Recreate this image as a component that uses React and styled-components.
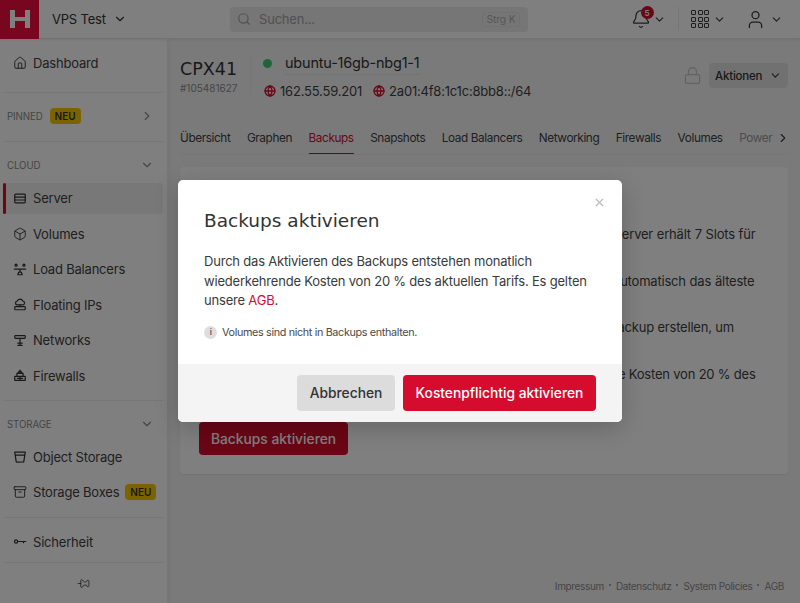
import { Fragment } from 'react';
import styled, { createGlobalStyle } from 'styled-components';
import {
  Archive, Bell, ChevronDown, ChevronRight, Globe, Home, Lock, Pin, Search, User, X, Box,
} from 'lucide-react';

const GlobalStyle = createGlobalStyle`
  html, body { margin: 0; padding: 0; height: 100%; }
  body {
    font-family: Inter, "Liberation Sans", sans-serif;
    letter-spacing: -0.2px;
    color: #3a3a3a;
    background: #f5f5f5;
    overflow: hidden;
  }
  * { box-sizing: border-box; }
`;

const Page = styled.div`
  width: 800px;
  height: 603px;
  position: relative;
  overflow: hidden;
  display: flex;
  flex-direction: column;
`;

// Top bar
const TopBar = styled.header`
  height: 39px;
  flex: none;
  display: flex;
  align-items: center;
  position: relative;
  z-index: 1;
  background: #fff;
  border-bottom: 1px solid #e4e4e4;
  box-shadow: 0 1px 3px rgba(0, 0, 0, 0.08);
`;

const Logo = styled.div`
  width: 39px;
  height: 39px;
  background: #f00c3c;
  color: #fff;
  display: flex;
  align-items: center;
  justify-content: center;
`;

const Project = styled.div`
  display: flex;
  align-items: center;
  gap: 7px;
  margin-left: 13px;
  width: 178px;
  font-size: 13px;
  color: #333;
`;

const SearchBox = styled.div`
  width: 298px;
  height: 25px;
  background: #ededed;
  border-radius: 4px;
  display: flex;
  align-items: center;
  padding: 0 8px 0 7px;
  gap: 8px;
  font-size: 13px;
  color: #a2a2a2;
`;

const SearchText = styled.span`
  flex: 1;
`;

const Kbd = styled.span`
  width: 38px;
  height: 15px;
  font-size: 10.5px;
  line-height: 13px;
  text-align: center;
  border: 1px solid #e2e2e2;
  border-radius: 3px;
  color: #b0b0b0;
`;

const TopActions = styled.div`
  display: flex;
  align-items: center;
  margin-left: 103px;
`;

const ActionGroup = styled.div`
  position: relative;
  display: flex;
  align-items: center;
  gap: ${p => p.$gap || 5}px;
  margin-right: ${p => p.$mr || 0}px;
`;

const Badge = styled.span`
  position: absolute;
  top: -3px;
  left: 9.5px;
  width: 13px;
  height: 13px;
  border-radius: 50%;
  background: #d50c2d;
  color: #fff;
  font-size: 8px;
  font-weight: 600;
  display: flex;
  align-items: center;
  justify-content: center;
`;

const Divider = styled.span`
  width: 1px;
  height: 24px;
  background: #ececec;
  margin: 0 12px;
`;

const DotGrid = styled.div`
  display: grid;
  grid-template-columns: repeat(3, 5px);
  grid-auto-rows: 5px;
  gap: 1.5px;
`;

const Dot = styled.span`
  border: 1.3px solid #3a3a3a;
  border-radius: 1px;
`;

// Body layout
const Body = styled.div`
  flex: 1;
  display: flex;
  min-height: 0;
`;

const Sidebar = styled.aside`
  width: 168px;
  flex: none;
  background: #fff;
  border-right: 1px solid #ececec;
  box-shadow: 1px 0 6px rgba(0, 0, 0, 0.06);
  display: flex;
  flex-direction: column;
  padding: 0 4px 0 3px;
  position: relative;
`;

const NavItem = styled.div`
  height: 31px;
  margin: ${p => p.$mt || 0}px 0 ${p => (p.$mb === undefined ? 4.5 : p.$mb)}px 0;
  display: flex;
  align-items: center;
  gap: 6px;
  padding-left: 10px;
  font-size: 13px;
  color: #3f3f3f;
  white-space: nowrap;
  border-radius: 3px;
  position: relative;
  background: ${p => (p.$active ? '#f1f1f1' : 'transparent')};
  &::before {
    content: '';
    display: ${p => (p.$active ? 'block' : 'none')};
    position: absolute;
    left: 0;
    top: 0;
    bottom: 0;
    width: 3px;
    border-radius: 2px;
    background: #d50c2d;
  }
`;

const IconSlot = styled.span`
  width: 14px;
  height: 15px;
  display: flex;
  align-items: center;
  justify-content: center;
  color: #333;
`;

const Rule = styled.div`
  height: 1px;
  flex: none;
  background: #efefef;
  margin-bottom: ${p => p.$mb || 0}px;
`;

const SectionHead = styled.div`
  height: 16px;
  flex: none;
  display: flex;
  align-items: center;
  padding: 0 9px 0 4px;
  gap: 7px;
  font-size: 9.7px;
  letter-spacing: -0.1px;
  color: #8b8b8b;
  margin-bottom: ${p => p.$mb || 0}px;
`;

const Grow = styled.span`
  flex: 1;
`;

const NewTag = styled.span`
  width: 31px;
  height: 16px;
  flex: none;
  background: #f7c600;
  color: #333;
  font-size: 10px;
  font-weight: 600;
  letter-spacing: 0;
  border-radius: 4px;
  line-height: 16px;
  text-align: center;
`;

const Unpin = styled.div`
  margin-top: auto;
  height: 41px;
  border-top: 1px solid #efefef;
  display: flex;
  align-items: center;
  justify-content: center;
  color: #3f3f3f;
`;

// Main column
const Main = styled.main`
  flex: 1;
  min-width: 0;
  display: flex;
  flex-direction: column;
  padding: 0 12px;
  position: relative;
`;

const ServerHead = styled.div`
  height: 79px;
  display: flex;
  padding-top: 17px;
  flex: none;
`;

const Plan = styled.div`
  width: 71px;
  height: 39px;
  border-right: 1px solid #efefef;
`;

const PlanName = styled.div`
  font-family: "DejaVu Sans", sans-serif;
  font-size: 17.5px;
  line-height: 26px;
  letter-spacing: 0;
  color: #333;
`;

const PlanId = styled.div`
  font-size: 10px;
  line-height: 12px;
  color: #8b8b8b;
  letter-spacing: 0;
`;

const ServerInfo = styled.div`
  margin-left: 12px;
  flex: 1;
`;

const NameRow = styled.div`
  display: flex;
  align-items: center;
  height: 22px;
  margin-top: -4px;
`;

const StatusDot = styled.span`
  width: 9px;
  height: 9px;
  border-radius: 50%;
  background: #3ecb73;
  margin-right: 13px;
`;

const ServerName = styled.span`
  font-size: 14.5px;
  line-height: 18px;
  color: #333;
  border-bottom: 1px solid #e8e8e8;
  padding-bottom: 2px;
  margin-top: 2px;
`;

const IpRow = styled.div`
  display: flex;
  align-items: center;
  margin-top: 7px;
  height: 20px;
  font-size: 13px;
  color: #3f3f3f;
`;

const Ip = styled.span`
  display: flex;
  align-items: center;
  gap: 4px;
  margin: 0 10px 0 1px;
  svg { color: #d50c2d; }
`;

const HeadActions = styled.div`
  display: flex;
  align-items: center;
  gap: 7px;
  height: 25px;
  margin-top: 7px;
  color: #c4c4c4;
`;

const ActionsButton = styled.button`
  width: 79px;
  height: 25px;
  border: 0;
  border-radius: 4px;
  background: #e2e2e2;
  color: #333;
  font: 500 11.5px Inter, sans-serif;
  letter-spacing: -0.2px;
  display: flex;
  align-items: center;
  justify-content: center;
  gap: 7px;
`;

const Tabs = styled.nav`
  height: 37px;
  flex: none;
  display: flex;
  gap: 16.5px;
  font-size: 11.8px;
  letter-spacing: -0.4px;
  white-space: nowrap;
  overflow: hidden;
  position: relative;
  border-bottom: 1px solid #ececec;
`;

const Tab = styled.span`
  height: 37px;
  padding-top: 13px;
  color: ${p => (p.$active ? '#d50c2d' : p.$faded ? '#9a9a9a' : '#3f3f3f')};
  border-bottom: 2px solid ${p => (p.$active ? '#d50c2d' : 'transparent')};
`;

const TabArrow = styled.span`
  position: absolute;
  right: -2px;
  top: 13px;
  color: #3a3a3a;
  display: flex;
`;

const Card = styled.section`
  margin-top: 12px;
  height: 307px;
  flex: none;
  background: #fff;
  border-radius: 4px;
  box-shadow: 0 1px 2px rgba(0, 0, 0, 0.08);
  padding: 57px 19px 0;
  font-size: 13px;
  line-height: 20px;
  color: #3f3f3f;
`;

const CardLine = styled.p`
  margin: 0 0 ${p => p.$mb || 26.7}px;
  word-spacing: ${p => p.$ws || 0}px;
  white-space: nowrap;
`;

const PrimaryBackup = styled.button`
  border: 0;
  display: block;
  width: 149px;
  height: 33px;
  border-radius: 4px;
  background: #d50c2d;
  color: #fff;
  font: 500 13.8px Inter, sans-serif;
`;

const Footer = styled.footer`
  display: flex;
  justify-content: flex-end;
  align-items: center;
  gap: 5px;
  margin-top: 106px;
  padding-right: 4px;
  font-size: 10px;
  line-height: 12px;
  letter-spacing: -0.35px;
  color: #8b8b8b;
`;

const FooterDot = styled.span`
  width: 2px;
  height: 2px;
  border-radius: 50%;
  background: #8b8b8b;
  margin-top: -3px;
`;

// Modal
const Backdrop = styled.div`
  position: absolute;
  inset: 0;
  z-index: 2;
  background: rgba(0, 0, 0, 0.5);
  display: flex;
  justify-content: center;
  padding-top: 180px;
`;

const Modal = styled.div`
  width: 444px;
  height: 242px;
  background: #fff;
  border-radius: 5px;
  position: relative;
  overflow: hidden;
  box-shadow: 0 6px 24px rgba(0, 0, 0, 0.2);
  display: flex;
  flex-direction: column;
`;

const CloseButton = styled.span`
  position: absolute;
  top: 16px;
  right: 16px;
  color: #bcbcbc;
  display: flex;
`;

const ModalBody = styled.div`
  flex: 1;
  padding: 28px 26px 0;
`;

const ModalTitle = styled.h2`
  margin: 0 0 18px;
  font-family: "DejaVu Sans", sans-serif;
  font-size: 18.5px;
  line-height: 26px;
  font-weight: 400;
  letter-spacing: 0;
  color: #333;
`;

const ModalText = styled.p`
  margin: 0;
  font-size: 13px;
  line-height: 19.5px;
  color: #3a3a3a;
`;

const Link = styled.a`
  color: #d50c2d;
`;

const Hint = styled.div`
  display: flex;
  align-items: center;
  gap: 5px;
  margin-top: 15px;
  font-size: 10.8px;
  letter-spacing: -0.35px;
  color: #4a4a4a;
`;

const HintIcon = styled.span`
  width: 13px;
  height: 13px;
  border-radius: 50%;
  background: #dedede;
  color: #555;
  font-size: 8px;
  font-weight: 600;
  display: flex;
  align-items: center;
  justify-content: center;
`;

const ModalFooter = styled.div`
  height: 58px;
  flex: none;
  background: #f4f4f4;
  display: flex;
  justify-content: flex-end;
  align-items: center;
  gap: 8px;
  padding-right: 26px;
`;

const ModalButton = styled.button`
  border: 0;
  height: 36px;
  width: ${p => p.$width}px;
  border-radius: 4px;
  background: ${p => (p.$primary ? '#d50c2d' : '#dcdcdc')};
  color: ${p => (p.$primary ? '#fff' : '#333')};
  font: 500 13.8px Inter, sans-serif;
`;

// Icons that lucide has no close match for
const HLogo = () => (
  <svg width="20" height="18" viewBox="0 0 20 18" fill="currentColor">
    <path d="M0 0h5v7h10V0h5v18h-5v-7H5v7H0z" />
  </svg>
);

const Line = ({ children, size = 15 }) => (
  <svg width={size} height={size} viewBox="0 0 16 16" fill="none" stroke="currentColor" strokeWidth="1.4" strokeLinecap="round" strokeLinejoin="round">
    {children}
  </svg>
);

const ServerIcon = () => (
  <Line><rect x="2" y="3" width="12" height="10" rx="1" /><path d="M2 6.3h12M2 9.7h12" /></Line>
);
const BalancerIcon = () => (
  <Line>
    <circle cx="3.5" cy="3" r="1.2" /><circle cx="12.5" cy="3" r="1.2" />
    <path d="M1.5 7.5h13M8 7.5v3M5.5 14l1-3h3l1 3z" />
  </Line>
);
const FloatingIcon = () => (
  <Line>
    <path d="M4.5 8.5a2.2 2.2 0 0 1 .3-4.3A3.4 3.4 0 0 1 11.2 4a2.3 2.3 0 0 1 .3 4.5z" />
    <path d="M8 8.5v2" /><rect x="2" y="10.5" width="12" height="3.5" rx="0.8" />
  </Line>
);
const NetworkIcon = () => (
  <Line>
    <rect x="2" y="2.5" width="12" height="3" rx="0.8" />
    <path d="M8 5.5v8M5.5 11h5M5.5 13.5h5" />
  </Line>
);
const FirewallIcon = () => (
  <Line>
    <path d="M8 2l2.3 3H5.7zM4.5 5.5h7v3.5h-7zM2 9h12v4.5H2zM8 9v4.5M5 11.2h6" />
  </Line>
);
const BucketIcon = () => (
  <Line><path d="M2 3h12l-1.6 10.5a1 1 0 0 1-1 .8H4.6a1 1 0 0 1-1-.8zM2.6 6.5h10.8" /></Line>
);
const KeyIcon = () => (
  <Line><circle cx="3.5" cy="8" r="1.8" /><path d="M5.5 8h9M12 8v1.4" /></Line>
);

const GlobeIcon = () => <Globe size={12} strokeWidth={2.6} />;

const Nav = ({ icon, label, tag, active, mb }) => (
  <NavItem $active={active} $mb={mb}>
    <IconSlot>{icon}</IconSlot>
    {label}
    {tag && <NewTag>NEU</NewTag>}
  </NavItem>
);

const tabs = ['Übersicht', 'Graphen', 'Backups', 'Snapshots', 'Load Balancers', 'Networking', 'Firewalls', 'Volumes'];
const footerLinks = ['Impressum', 'Datenschutz', 'System Policies', 'AGB'];

export default function App() {
  return (
    <Page>
      <GlobalStyle />
      <TopBar>
        <Logo><HLogo /></Logo>
        <Project>VPS Test <ChevronDown size={14} /></Project>
        <SearchBox>
          <Search size={14} />
          <SearchText>Suchen...</SearchText>
          <Kbd>Strg K</Kbd>
        </SearchBox>
        <TopActions>
          <ActionGroup $gap={2}>
            <Bell size={20} strokeWidth={1.5} />
            <Badge>5</Badge>
            <ChevronDown size={13} />
          </ActionGroup>
          <Divider />
          <ActionGroup $gap={4} $mr={19}>
            <DotGrid>
              {Array.from({ length: 9 }, (_, i) => <Dot key={i} />)}
            </DotGrid>
            <ChevronDown size={13} />
          </ActionGroup>
          <ActionGroup $gap={4}>
            <User size={21} strokeWidth={1.5} />
            <ChevronDown size={13} />
          </ActionGroup>
        </TopActions>
      </TopBar>

      <Body>
        <Sidebar>
          <NavItem $mt={8} $mb={14}>
            <IconSlot><Home size={14} strokeWidth={1.6} /></IconSlot>
            Dashboard
          </NavItem>
          <Rule $mb={15} />
          <SectionHead $mb={17}>
            PINNED <NewTag>NEU</NewTag>
            <Grow />
            <ChevronRight size={14} />
          </SectionHead>
          <Rule $mb={15} />
          <SectionHead $mb={9.5}>
            CLOUD
            <Grow />
            <ChevronDown size={14} />
          </SectionHead>
          <Nav active icon={<ServerIcon />} label="Server" />
          <Nav icon={<Box size={14} strokeWidth={1.5} />} label="Volumes" />
          <Nav icon={<BalancerIcon />} label="Load Balancers" />
          <Nav icon={<FloatingIcon />} label="Floating IPs" />
          <Nav icon={<NetworkIcon />} label="Networks" />
          <Nav icon={<FirewallIcon />} label="Firewalls" mb={8.5} />
          <Rule $mb={15.5} />
          <SectionHead $mb={9}>
            STORAGE
            <Grow />
            <ChevronDown size={14} />
          </SectionHead>
          <Nav icon={<BucketIcon />} label="Object Storage" />
          <Nav icon={<Archive size={14} strokeWidth={1.6} />} label="Storage Boxes" tag mb={9} />
          <Rule $mb={8.5} />
          <Nav icon={<KeyIcon />} label="Sicherheit" mb={0} />
          <Unpin><Pin size={13} strokeWidth={1.5} style={{ transform: 'rotate(90deg)' }} /></Unpin>
        </Sidebar>

        <Main>
          <ServerHead>
            <Plan>
              <PlanName>CPX41</PlanName>
              <PlanId>#105481627</PlanId>
            </Plan>
            <ServerInfo>
              <NameRow>
                <StatusDot />
                <ServerName>ubuntu-16gb-nbg1-1</ServerName>
              </NameRow>
              <IpRow>
                <Ip><GlobeIcon />162.55.59.201</Ip>
                <Ip><GlobeIcon />2a01:4f8:1c1c:8bb8::/64</Ip>
              </IpRow>
            </ServerInfo>
            <HeadActions>
              <Lock size={19} strokeWidth={1.5} />
              <ActionsButton>Aktionen <ChevronDown size={13} /></ActionsButton>
            </HeadActions>
          </ServerHead>

          <Tabs>
            {tabs.map(t => <Tab key={t} $active={t === 'Backups'}>{t}</Tab>)}
            <Tab $faded>Power</Tab>
            <TabArrow><ChevronRight size={14} /></TabArrow>
          </Tabs>

          <Card>
            <CardLine $ws={0.3}>Backups sind automatisch erstellte Kopien der SSD-Festplatte. Jeder Server erhält 7 Slots für</CardLine>
            <CardLine $ws={0.33}>Sind alle Slots voll, überschreibt ein neu erstelltes Backup bei Bedarf automatisch das älteste</CardLine>
            <CardLine>Du kannst jederzeit auch manuell und ohne Zeitplan ein zusätzliches Backup erstellen, um</CardLine>
            <CardLine $mb={38}>Durch das Aktivieren der Backups entstehen monatlich wiederkehrende Kosten von 20 % des</CardLine>
            <PrimaryBackup>Backups aktivieren</PrimaryBackup>
          </Card>

          <Footer>
            {footerLinks.map((l, i) => (
              <Fragment key={l}>
                {i > 0 && <FooterDot />}
                <span>{l}</span>
              </Fragment>
            ))}
          </Footer>
        </Main>
      </Body>

      <Backdrop>
        <Modal>
          <CloseButton><X size={13} strokeWidth={2.4} /></CloseButton>
          <ModalBody>
            <ModalTitle>Backups aktivieren</ModalTitle>
            <ModalText>
              Durch das Aktivieren des Backups entstehen monatlich wiederkehrende Kosten von 20 % des aktuellen Tarifs. Es gelten unsere <Link>AGB</Link>.
            </ModalText>
            <Hint><HintIcon>i</HintIcon>Volumes sind nicht in Backups enthalten.</Hint>
          </ModalBody>
          <ModalFooter>
            <ModalButton $width={98}>Abbrechen</ModalButton>
            <ModalButton $primary $width={193}>Kostenpflichtig aktivieren</ModalButton>
          </ModalFooter>
        </Modal>
      </Backdrop>
    </Page>
  );
}
